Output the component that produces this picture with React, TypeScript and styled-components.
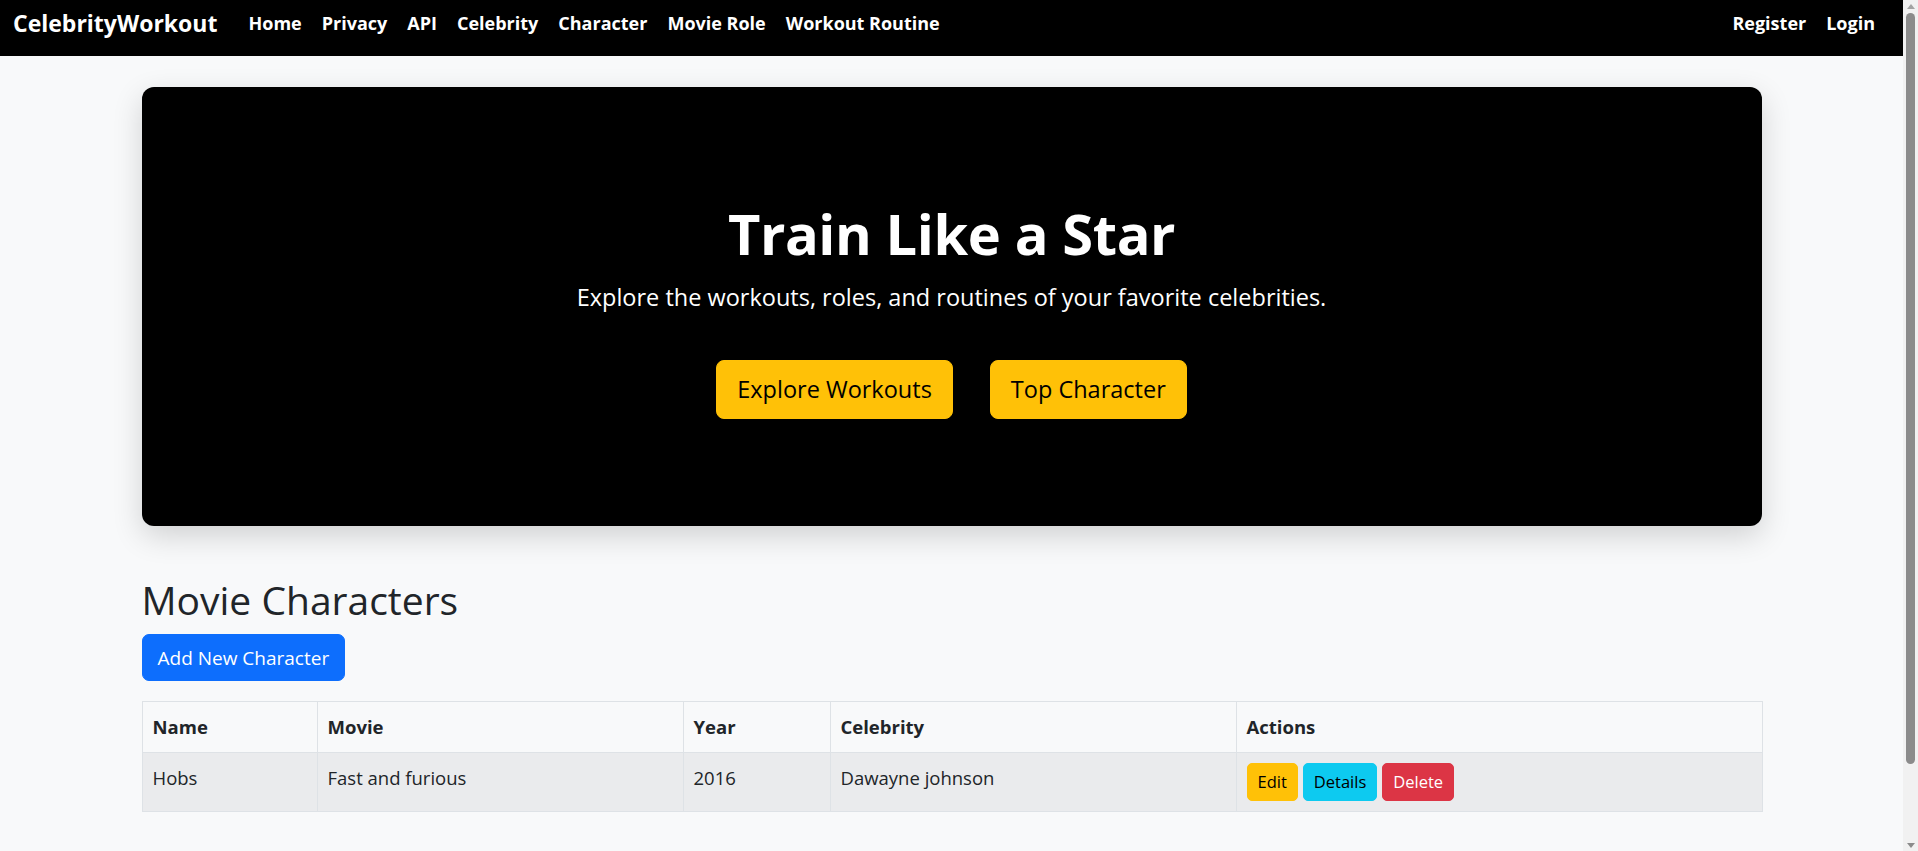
import React from "react";
import styled, { createGlobalStyle } from "styled-components";

const FONT = `"Open Sans", "Noto Sans", "Liberation Sans", sans-serif`;
const SCROLLBAR = 15;

const GlobalStyle = createGlobalStyle`
  html, body { margin: 0; padding: 0; }
  body {
    background: #f8f9fa;
    color: #212529;
    font-family: ${FONT};
    font-size: 18.5px;
    line-height: 1.5;
    padding-right: ${SCROLLBAR}px;
  }
  * { box-sizing: border-box; }
`;

/* Browser scrollbar drawn over the right edge of the page */
const ScrollTrack = styled.div`
  position: fixed;
  top: 0;
  right: 0;
  width: ${SCROLLBAR}px;
  height: 100vh;
  background: #f1f1f1;
  display: flex;
  flex-direction: column;
  align-items: center;
  z-index: 10;
`;

const ScrollArrow = styled.div<{ $dir: "up" | "down" }>`
  flex: none;
  height: 12px;
  display: flex;
  align-items: center;
  justify-content: center;
  &::before {
    content: "";
    width: 0;
    height: 0;
    border-left: 4px solid transparent;
    border-right: 4px solid transparent;
    ${(p) => (p.$dir === "up" ? "border-bottom: 5px solid #a3a3a3;" : "border-top: 5px solid #8b8b8b;")}
  }
`;

const ScrollThumb = styled.div`
  flex: none;
  width: 9px;
  height: 751px;
  margin-top: 1px;
  border-radius: 5px;
  background: #8b8b8b;
`;

const ScrollSpacer = styled.div`
  flex: 1;
`;

const Navbar = styled.nav`
  height: 56px;
  background: #000;
  display: flex;
  align-items: flex-start;
  justify-content: space-between;
  padding: 8px 28px 0 13px;
`;

const NavGroup = styled.div`
  display: flex;
  align-items: center;
`;

const Brand = styled.a`
  color: #fff;
  font-size: 23px;
  font-weight: 700;
  line-height: 31px;
  margin-right: 21px;
  text-decoration: none;
`;

const NavLink = styled.a`
  color: #fff;
  font-size: 18px;
  font-weight: 700;
  line-height: 31px;
  padding: 0 10px;
  text-decoration: none;
  &:last-child { padding-right: 0; }
`;

const Main = styled.main`
  max-width: 1620px;
  margin: 31px auto 0;
  padding-bottom: 120px;
`;

const Hero = styled.section`
  background: #000;
  color: #fff;
  border-radius: 12px;
  box-shadow: 0 10px 30px rgba(0, 0, 0, 0.16);
  padding: 110px 48px 107px;
  display: flex;
  flex-direction: column;
  align-items: center;
  text-align: center;
`;

const HeroTitle = styled.h1`
  margin: 0 0 10px;
  font-size: 56px;
  letter-spacing: -0.4px;
  font-weight: 700;
  line-height: 72px;
`;

const HeroLead = styled.p`
  margin: 0 0 43px;
  font-size: 23.5px;
  font-weight: 400;
  line-height: 37.5px;
`;

const HeroActions = styled.div`
  display: flex;
  gap: 37px;
`;

type Variant = "warning" | "info" | "danger" | "primary";

const palette: Record<Variant, { bg: string; fg: string }> = {
  warning: { bg: "#ffc107", fg: "#000" },
  info: { bg: "#0dcaf0", fg: "#000" },
  danger: { bg: "#dc3545", fg: "#fff" },
  primary: { bg: "#0d6efd", fg: "#fff" },
};

type Size = "sm" | "md" | "lg";

const sizes: Record<Size, { font: string; line: string; pad: string; radius: string }> = {
  lg: { font: "23.5px", line: "37.5px", pad: "10px 20px", radius: "8px" },
  md: { font: "19px", line: "30px", pad: "7.5px 15px", radius: "7px" },
  sm: { font: "16.5px", line: "26.25px", pad: "5px 10px", radius: "5px" },
};

const Button = styled.button<{ $variant: Variant; $size?: Size }>`
  font-family: ${FONT};
  font-weight: 400;
  border: 1px solid ${(p) => palette[p.$variant].bg};
  background: ${(p) => palette[p.$variant].bg};
  color: ${(p) => palette[p.$variant].fg};
  cursor: pointer;
  font-size: ${(p) => sizes[p.$size ?? "md"].font};
  line-height: ${(p) => sizes[p.$size ?? "md"].line};
  padding: ${(p) => sizes[p.$size ?? "md"].pad};
  border-radius: ${(p) => sizes[p.$size ?? "md"].radius};
`;

const SectionTitle = styled.h2`
  margin: 50px 0 10px;
  font-size: 39px;
  font-weight: 500;
  line-height: 48px;
`;

const Table = styled.table`
  width: 100%;
  margin-top: 20px;
  border-collapse: collapse;
  table-layout: fixed;
  border: 1px solid #dee2e6;
`;

const Col = styled.col<{ $w: number }>`
  width: ${(p) => p.$w}px;
`;

const HeadCell = styled.th`
  text-align: left;
  font-weight: 700;
  padding: 10px;
  line-height: 30px;
  border: 1px solid #dee2e6;
  background: #f8f9fa;
  vertical-align: top;
`;

const Row = styled.tr<{ $striped?: boolean }>`
  background: ${(p) => (p.$striped ? "#eaebed" : "#f8f9fa")};
`;

const Cell = styled.td`
  padding: 10px;
  line-height: 30px;
  border: 1px solid #dee2e6;
  vertical-align: top;
`;

const Actions = styled.div`
  display: flex;
  gap: 5px;
`;

const links = ["Home", "Privacy", "API", "Celebrity", "Character", "Movie Role", "Workout Routine"];

const rows = [{ name: "Hobs", movie: "Fast and furious", year: "2016", celebrity: "Dawayne johnson" }];

export default function App() {
  return (
    <>
      <GlobalStyle />
      <Navbar>
        <NavGroup>
          <Brand href="#">CelebrityWorkout</Brand>
          {links.map((l) => (
            <NavLink key={l} href="#">{l}</NavLink>
          ))}
        </NavGroup>
        <NavGroup>
          <NavLink href="#">Register</NavLink>
          <NavLink href="#">Login</NavLink>
        </NavGroup>
      </Navbar>
      <Main>
        <Hero>
          <HeroTitle>Train Like a Star</HeroTitle>
          <HeroLead>Explore the workouts, roles, and routines of your favorite celebrities.</HeroLead>
          <HeroActions>
            <Button $variant="warning" $size="lg">Explore Workouts</Button>
            <Button $variant="warning" $size="lg">Top Character</Button>
          </HeroActions>
        </Hero>
        <SectionTitle>Movie Characters</SectionTitle>
        <Button $variant="primary">Add New Character</Button>
        <Table>
          <colgroup>
            <Col $w={175} />
            <Col $w={366} />
            <Col $w={147} />
            <Col $w={406} />
            <Col $w={526} />
          </colgroup>
          <thead>
            <tr>
              <HeadCell>Name</HeadCell>
              <HeadCell>Movie</HeadCell>
              <HeadCell>Year</HeadCell>
              <HeadCell>Celebrity</HeadCell>
              <HeadCell>Actions</HeadCell>
            </tr>
          </thead>
          <tbody>
            {rows.map((r, i) => (
              <Row key={r.name} $striped={i % 2 === 0}>
                <Cell>{r.name}</Cell>
                <Cell>{r.movie}</Cell>
                <Cell>{r.year}</Cell>
                <Cell>{r.celebrity}</Cell>
                <Cell>
                  <Actions>
                    <Button $variant="warning" $size="sm">Edit</Button>
                    <Button $variant="info" $size="sm">Details</Button>
                    <Button $variant="danger" $size="sm">Delete</Button>
                  </Actions>
                </Cell>
              </Row>
            ))}
          </tbody>
        </Table>
      </Main>
      <ScrollTrack aria-hidden="true">
        <ScrollArrow $dir="up" />
        <ScrollThumb />
        <ScrollSpacer />
        <ScrollArrow $dir="down" />
      </ScrollTrack>
    </>
  );
}
